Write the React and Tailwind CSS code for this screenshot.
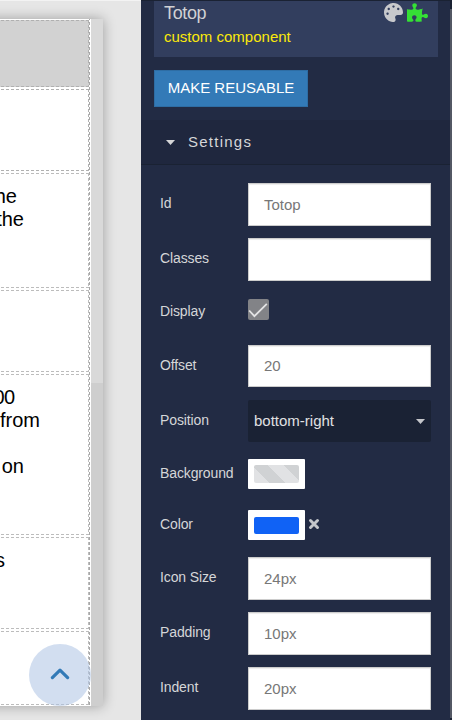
import React from "react";
import { FaPalette, FaPuzzlePiece } from "react-icons/fa";

const sections = [
  { box: "h-[67px] bg-[#d2d2d2] [--dash:#b0b0b0]", lines: [] },
  { box: "h-[82px] [--dash:#b0b0b0]", lines: [] },
  { box: "h-[115px] [--dash:#bcbcbc]", lines: [["the", "w-[34px]"], ["the", "w-[41px]"]] },
  { box: "h-[82px] [--dash:#bcbcbc]", lines: [] },
  { box: "h-[161px] [--dash:#bcbcbc]", lines: [["100", "w-[31px] tracking-[-0.6px]"], ["from", "w-[57px]"], ["", "w-[57px]"], ["on", "w-[41px]"]] },
  { box: "h-[92px] [--dash:#bcbcbc]", lines: [["is", "w-[22px]"]] },
  { box: "h-[74px] [--dash:#bcbcbc]", lines: [] },
];

// Dashed outline: 3px dashes with 2px gaps along the top, bottom and right edges.
const outline =
  "bg-[image:repeating-linear-gradient(90deg,var(--dash)_0_1px,transparent_1px_3px,var(--dash)_3px_5px),repeating-linear-gradient(90deg,var(--dash)_0_1px,transparent_1px_3px,var(--dash)_3px_5px),repeating-linear-gradient(180deg,var(--dash)_0_3px,transparent_3px_5px)] bg-[size:100%_1px,100%_1px,1px_100%] bg-[position:0_0,0_100%,100%_0] bg-no-repeat";

function Canvas() {
  return (
    <div className="relative h-[720px] w-[141px] shrink-0 overflow-hidden border-t border-[#f3f3f3] bg-[#e6e6e6]">
      <div className="-ml-[17px] mt-[18px] flex h-[687px] w-[120px] shadow-[0_0_12px_rgba(0,0,0,0.32)]">
        <div className="flex h-[687px] w-[107px] shrink-0 flex-col gap-[2px] bg-white bg-[image:repeating-linear-gradient(180deg,#a8a8a8_0_1px,transparent_1px_3px,#a8a8a8_3px_5px)] bg-[size:1px_100%] bg-[position:100%_0] bg-no-repeat pt-px">
          {sections.map((s, i) => (
            <div key={i} className={"w-[106px] shrink-0 pt-[12px] " + outline + " " + s.box}>
              {s.lines.map(([t, w], j) => (
                <div key={j} className={"h-[23px] whitespace-nowrap text-right text-[20px] leading-[23px] text-black " + w}>
                  {t}
                </div>
              ))}
            </div>
          ))}
        </div>
        <div className="w-[13px] shrink-0 border-l border-white bg-[#cecece]">
          <div className="h-[364px] bg-[#d9d9d9]" />
        </div>
      </div>
      <div className="absolute left-[29px] top-[643px] flex h-[62px] w-[62px] items-center justify-center rounded-full bg-[#adc2e4]/55">
        <svg width="20" height="14" viewBox="0 0 20 14" fill="none" stroke="#337ab7" strokeWidth="3.2">
          <path d="M2.4 9.6 10 2.2l7.6 7.4" strokeLinejoin="round" strokeLinecap="round" />
        </svg>
      </div>
    </div>
  );
}

function Row({ label, className, children }) {
  return (
    <div className={"flex " + className}>
      <div className="w-[88px] shrink-0 text-[14px] leading-5 tracking-[-0.12px] text-[#d5d6d8]">{label}</div>
      {children}
    </div>
  );
}

function Field({ value, className = "h-[43px]" }) {
  return (
    <div className={"-mt-[10px] flex w-[183px] items-center border border-[#cccccc] bg-white pl-[15px] pt-px text-[15px] text-[#777777] shadow-[inset_0_1px_1px_rgba(0,0,0,0.075)] " + className}>
      {value}
    </div>
  );
}

function Swatch({ children }) {
  return <div className="h-[30px] w-[57px] rounded-[1px] bg-white px-[6px] pt-[6px]">{children}</div>;
}

export default function App() {
  return (
    <div className="flex h-[720px] w-[452px] overflow-hidden font-['Liberation_Sans',Arial,sans-serif]">
      <Canvas />
      <div className="flex h-[720px] w-[309px] flex-col border-t border-[#1a2233] bg-[#222b44]">
        <div className="ml-[13px] flex h-[56px] w-[284px] shrink-0 justify-between bg-[#323e5e] pl-[10px] pr-[10px]">
          <div>
            <div className="mt-[2px] text-[18px] leading-[20px] tracking-[-0.35px] text-[#d0d1d4]">Totop</div>
            <div className="mt-[4px] text-[15px] leading-[20px] text-[#fbe90a]">custom component</div>
          </div>
          <div className="mt-[2px] flex gap-[4px]">
            <FaPalette className="h-[19px] w-[19px] text-[#c8c9cc]" />
            <FaPuzzlePiece className="h-[19px] w-[21px] text-[#35e035]" />
          </div>
        </div>
        <div className="ml-[13px] mt-[13px] flex h-[37px] w-[154px] shrink-0 items-center justify-center border border-[#2e6da4] bg-[#337ab7] text-[15px] text-white">
          MAKE REUSABLE
        </div>
        <div className="mt-[13px] flex h-[45px] shrink-0 items-center border-b border-[#1a2233] bg-[#1f273e] pl-[25px] text-[15px] tracking-[1.25px] text-[#d5d6d8]">
          <svg width="9" height="5" viewBox="0 0 9 5" className="mr-[13px] fill-[#d5d6d8]">
            <path d="M0 0h9L4.5 5z" />
          </svg>
          Settings
        </div>
        <div className="pl-[19px]">
          <Row label="Id" className="mt-[28px] h-[55px]"><Field value="Totop" /></Row>
          <Row label="Classes" className="h-[53px]"><Field value="" /></Row>
          <Row label="Display" className="h-[54px]">
            <svg width="21" height="21" viewBox="0 0 21 21" className="-mt-[2px]" fill="none">
              <rect width="21" height="21" rx="2" fill="#828387" />
              <path d="M1.2 11.5 6.4 17.2 18.8 4.8" stroke="#e4e4e5" strokeWidth="1.8" />
            </svg>
          </Row>
          <Row label="Offset" className="h-[55px]"><Field value="20" className="h-[42px]" /></Row>
          <Row label="Position" className="h-[53px]">
            <div className="-mt-[10px] flex h-[42px] w-[183px] items-center justify-between rounded-[2px] bg-[#1a2234] pl-[6px] pr-[6px] text-[15px] text-[#e0e1e3]">
              bottom-right
              <svg width="9" height="5" viewBox="0 0 9 5" className="fill-[#c4c6ca]">
                <path d="M0 0h9L4.5 5z" />
              </svg>
            </div>
          </Row>
          <Row label="Background" className="h-[51px]">
            <div className="-mt-[4px]">
              <Swatch>
                <div className="h-[18px] w-[45px] rounded-[2px] bg-[image:repeating-linear-gradient(45deg,#e1e2e4_0_11.2px,#d0d2d4_11.2px_22.4px)]" />
              </Swatch>
            </div>
          </Row>
          <Row label="Color" className="h-[53px]">
            <div className="-mt-[4px] flex">
              <Swatch>
                <div className="mt-px h-[17px] w-[45px] rounded-[2px] bg-[#1062f5]" />
              </Swatch>
              <svg width="12" height="12" viewBox="0 0 12 12" className="ml-[3px] mt-[8px]" stroke="#c4c6ca" strokeWidth="3" strokeLinecap="round">
                <path d="M2.5 2.5l7 7M9.5 2.5l-7 7" />
              </svg>
            </div>
          </Row>
          <Row label="Icon Size" className="h-[55px]"><Field value="24px" /></Row>
          <Row label="Padding" className="h-[55px]"><Field value="10px" /></Row>
          <Row label="Indent" className="h-[20px]"><Field value="20px" /></Row>
        </div>
      </div>
      <div className="h-[720px] w-[2px] bg-[#1a2233] pb-[2px] pt-[9px]">
        <div className="h-full bg-[#535864]" />
      </div>
    </div>
  );
}
